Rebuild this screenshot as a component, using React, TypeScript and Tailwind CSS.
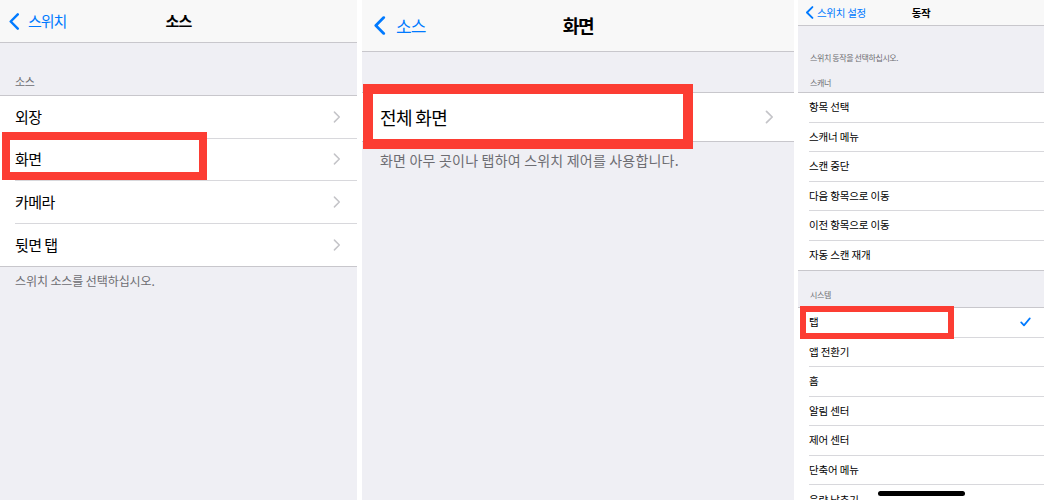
import type { ReactNode } from "react";

const font = "font-['Noto_Sans_CJK_KR','Noto_Sans',sans-serif]";

function BackChevron({ className }: { className: string }) {
  return (
    <svg viewBox="0 0 12 18" className={className} fill="none">
      <path d="M10 1.5L2.5 9l7.5 7.5" stroke="#007aff" strokeWidth="2.6" strokeLinecap="round" strokeLinejoin="round" />
    </svg>
  );
}

function Disclosure({ className }: { className: string }) {
  return (
    <svg viewBox="0 0 8 13" className={className} fill="none">
      <path d="M1.2 1.2L6.5 6.5l-5.3 5.3" stroke="#c4c4c8" strokeWidth="1.6" strokeLinecap="round" strokeLinejoin="round" />
    </svg>
  );
}

function Check() {
  return (
    <svg viewBox="0 0 11 10" className="h-[10px] w-[11px]" fill="none">
      <path d="M1.2 5.4L4 8.4l5.8-7" stroke="#007aff" strokeWidth="1.7" strokeLinecap="round" strokeLinejoin="round" />
    </svg>
  );
}

function RedBox({ className }: { className: string }) {
  return <div className={"pointer-events-none absolute border-[#fc3d33] " + className} />;
}

function SourcePanel() {
  const rows = ["외장", "화면", "카메라", "뒷면 탭"];
  return (
    <div className="relative h-full w-[357px] shrink-0 bg-[#efeff4]">
      <div className="grid h-[43px] grid-cols-[1fr_auto_1fr] items-center border-b border-[#c8c7cc] bg-[#f8f8f8]">
        <div className="flex items-center gap-[8px] pl-[8px] text-[15px] tracking-[-1px] text-[#007aff]">
          <BackChevron className="h-[17px] w-[12px]" />
          <span>스위치</span>
        </div>
        <div className="text-[15px] font-semibold tracking-[-0.8px] text-black">소스</div>
        <div />
      </div>
      <div className="flex h-[52px] items-end px-[15px] pb-[7px] text-[11px] leading-[14px] tracking-[-0.3px] text-[#6d6d72]">소스</div>
      <div className="border-y border-[#c8c7cc] bg-white">
        {rows.map((r, i) => (
          <div key={r} className="h-[42.5px] pl-[15px]">
            <div
              className={
                "flex h-full items-center justify-between pr-[16px] " +
                (i < rows.length - 1 ? "border-b border-[#d8d8dc]" : "")
              }
            >
              <span className="text-[15px] tracking-[-0.6px] text-black">{r}</span>
              <Disclosure className="h-[12px] w-[8px]" />
            </div>
          </div>
        ))}
      </div>
      <div className="px-[15px] pt-[6px] text-[12px] leading-[16px] tracking-[-0.1px] text-[#6d6d72]">
        스위치 소스를 선택하십시오.
      </div>
      <RedBox className="left-[2px] top-[132px] h-[48px] w-[205px] border-[8px]" />
    </div>
  );
}

function ScreenPanel() {
  return (
    <div className="relative h-full w-[432px] shrink-0 bg-[#efeff4]">
      <div className="grid h-[52px] grid-cols-[1fr_auto_1fr] items-center border-b border-[#c8c7cc] bg-[#f8f8f8]">
        <div className="flex items-center gap-[10px] pl-[11px] text-[17px] tracking-[-1px] text-[#007aff]">
          <BackChevron className="h-[19px] w-[13px]" />
          <span>소스</span>
        </div>
        <div className="text-[18px] font-semibold tracking-[-1.2px] text-black">화면</div>
        <div />
      </div>
      <div className="h-[40px]" />
      <div className="flex h-[50px] items-center justify-between border-y border-[#c8c7cc] bg-white pl-[18px] pr-[20px]">
        <span className="text-[18px] tracking-[-0.6px] text-black">전체 화면</span>
        <Disclosure className="h-[14px] w-[9px]" />
      </div>
      <div className="px-[18px] pt-[8px] text-[14px] leading-[20px] tracking-[0.2px] text-[#6d6d72]">
        화면 아무 곳이나 탭하여 스위치 제어를 사용합니다.
      </div>
      <RedBox className="left-[1px] top-[84px] h-[65px] w-[330px] border-[10px]" />
    </div>
  );
}

function ActionRow({ label, last, children }: { label: string; last?: boolean; children?: ReactNode }) {
  return (
    <div className="h-[29.5px] pl-[11px]">
      <div
        className={
          "flex h-full items-center justify-between pr-[13px] " + (last ? "" : "border-b border-[#d8d8dc]")
        }
      >
        <span className="text-[10.5px] tracking-[-0.15px] text-black">{label}</span>
        {children}
      </div>
    </div>
  );
}

function ActionPanel() {
  const scanner = ["항목 선택", "스캐너 메뉴", "스캔 중단", "다음 항목으로 이동", "이전 항목으로 이동", "자동 스캔 재개"];
  const system = ["탭", "앱 전환기", "홈", "알림 센터", "제어 센터", "단축어 메뉴", "음량 낮추기"];
  return (
    <div className="relative h-full min-w-0 flex-1 overflow-hidden bg-[#efeff4]">
      <div className="grid h-[26px] grid-cols-[1fr_auto_1fr] items-center border-b border-[#c8c7cc] bg-[#f8f8f8]">
        <div className="flex items-center gap-[3px] pl-[7px] text-[10.5px] tracking-[-0.3px] text-[#007aff]">
          <BackChevron className="h-[13px] w-[9px]" />
          <span>스위치 설정</span>
        </div>
        <div className="text-[10.5px] font-semibold tracking-[-0.4px] text-black">동작</div>
        <div />
      </div>
      <div className="flex h-[66px] flex-col px-[12px] text-[8px] leading-[12px] tracking-[-0.4px] text-[#6d6d72]">
        <div className="mt-[26px]">스위치 동작을 선택하십시오.</div>
        <div className="mt-[13px]">스캐너</div>
      </div>
      <div className="border-y border-[#c8c7cc] bg-white">
        {scanner.map((s, i) => (
          <ActionRow key={s} label={s} last={i === scanner.length - 1} />
        ))}
      </div>
      <div className="flex h-[36px] items-end px-[12px] pb-[6px] text-[8px] leading-[12px] tracking-[-0.4px] text-[#6d6d72]">
        시스템
      </div>
      <div className="border-t border-[#c8c7cc] bg-white">
        {system.map((s, i) => (
          <ActionRow key={s} label={s} last={i === system.length - 1}>
            {i === 0 ? <Check /> : null}
          </ActionRow>
        ))}
      </div>
      <RedBox className="left-[2px] top-[306px] h-[33px] w-[154px] border-[6px]" />
      <div className="absolute left-[80px] top-[491px] h-[5px] w-[87px] rounded-full bg-black" />
    </div>
  );
}

export default function App() {
  return (
    <div className={"flex h-[500px] w-[1044px] gap-0 overflow-hidden bg-white " + font}>
      <SourcePanel />
      <div className="w-[5px] shrink-0" />
      <ScreenPanel />
      <div className="w-[4px] shrink-0" />
      <ActionPanel />
    </div>
  );
}
